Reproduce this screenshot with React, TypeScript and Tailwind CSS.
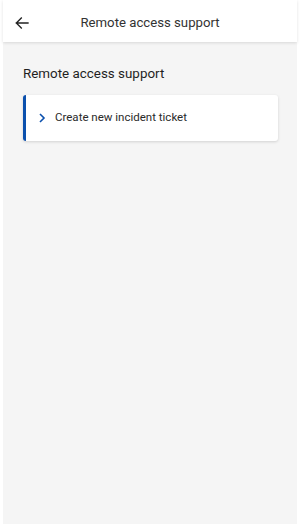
import React from "react";

const App: React.FC = () => {
  return (
    <div
      className="flex h-[524px] w-[300px] flex-col bg-white px-[3px]"
      style={{ fontFamily: "Roboto, 'Liberation Sans', sans-serif" }}
    >
      <header className="relative z-10 flex h-[42px] items-center bg-white pt-[3px] shadow-[0_1px_3px_rgba(0,0,0,0.12)]">
        <button className="flex h-[30px] w-[40px] items-center justify-center pr-[3px] text-[#222]">
          <svg width="16" height="16" viewBox="0 0 24 24" fill="none">
            <path
              d="M21 12H3.5M11 4.5L3.5 12l7.5 7.5"
              stroke="currentColor"
              strokeWidth="2"
              strokeLinecap="square"
            />
          </svg>
        </button>
        <h1 className="flex-1 pr-[40px] text-center text-[13.2px] font-normal text-[#333]">
          Remote access support
        </h1>
      </header>
      <main className="flex-1 bg-[#f5f5f5] px-[20px] pt-[24px]">
        <h2 className="text-[13.4px] leading-[16px] font-normal text-[#1f1f1f]">
          Remote access support
        </h2>
        <div className="mt-[13px] flex h-[46px] w-[255px] items-center rounded-[3px] border-l-[3px] border-[#0b50ad] bg-white pl-[10px] shadow-[0_1px_3px_rgba(0,0,0,0.15)]">
          <svg width="12" height="12" viewBox="0 0 12 12" fill="none">
            <path d="M4 2L8 6L4 10" stroke="#0b50ad" strokeWidth="1.6" />
          </svg>
          <span className="ml-[7px] text-[11.5px] text-[#2a2a2a]">
            Create new incident ticket
          </span>
        </div>
      </main>
    </div>
  );
};

export default App;
